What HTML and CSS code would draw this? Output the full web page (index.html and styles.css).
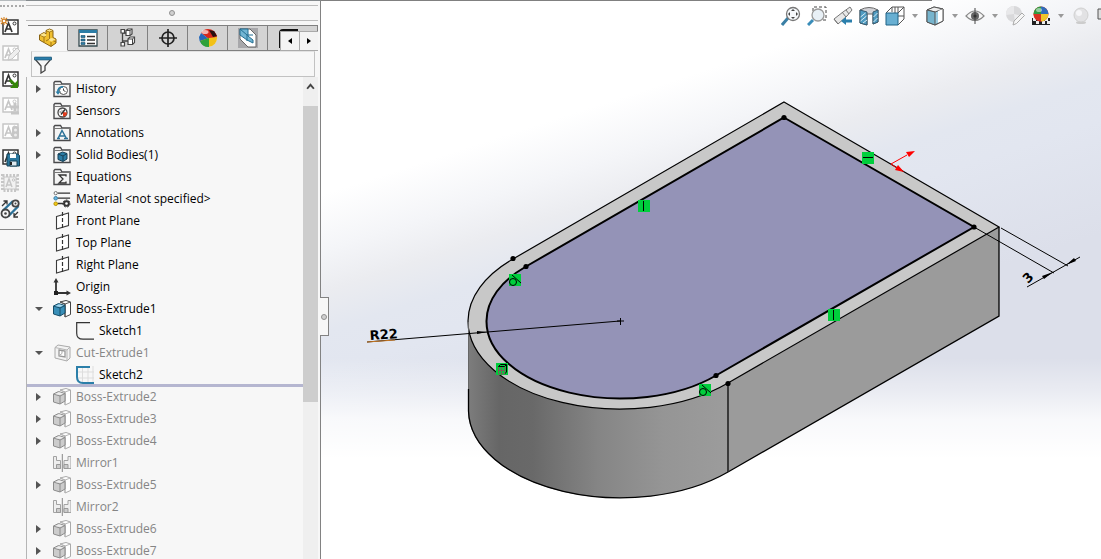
FILE: index.html
```
<!DOCTYPE html>
<html lang="en">
<head>
<meta charset="utf-8">
<title>Part design</title>
<link rel="stylesheet" href="styles.css">
</head>
<body>
<svg class="defs" aria-hidden="true">
  <defs>
    <linearGradient id="ball" x1="0" y1="0" x2="1" y2="1"><stop offset="0" stop-color="#fff"/><stop offset="1" stop-color="#b8b8ba"/></linearGradient>
    <symbol id="folder" viewBox="0 0 18 18"><path d="M1 16.5V2.5l1-1h5.5l1.500 2.500h8v12.500z" fill="#f4f4f4" stroke="#4a4a4c" stroke-width="1.400"/><path d="M1 4.500h16" stroke="#777" stroke-width="1"/></symbol>
    <symbol id="history" viewBox="0 0 18 18"><use href="#folder"/><circle cx="10.500" cy="10.500" r="4" fill="#fff" stroke="#555"/><path d="M10.500 8.500v2l2 1" fill="none" stroke="#444"/><path d="M5 13c-1-4 2-6.500 5-6" fill="none" stroke="#2a7da5" stroke-width="1.800"/><path d="M2.500 11.500h5L5 14.800z" fill="#2a7da5"/></symbol>
    <symbol id="sensors" viewBox="0 0 18 18"><use href="#folder"/><circle cx="9.500" cy="10.500" r="4.500" fill="#fff" stroke="#444" stroke-width="1.300"/><path d="M10 10l4 .5a4 4 0 0 1-4 4z" fill="#e23c1c"/><path d="M8 12.500L12 7.500" stroke="#333" stroke-width="1.500"/><path d="M6.500 10h2M8 7.500l1 1" stroke="#555"/></symbol>
    <symbol id="annotations" viewBox="0 0 18 18"><use href="#folder"/><path d="M5 14.500L9 6.500l4.500 8M6.500 12h5.500M4 14.500h3M11 14.500h4" fill="none" stroke="#2b7197" stroke-width="1.500"/></symbol>
    <symbol id="bodies" viewBox="0 0 18 18"><use href="#folder"/><path d="M5 8l4.500-2 4.500 1.500v5.500l-4 2.500-5-2z" fill="#2b7da6" stroke="#173f55"/><path d="M5 8l5 2 4-2.500M10 10v5" fill="none" stroke="#173f55"/></symbol>
    <symbol id="equations" viewBox="0 0 18 18"><use href="#folder"/><path d="M13 8.500V7H6l4 4-4 4h7v-1.500" fill="none" stroke="#333" stroke-width="1.300"/></symbol>
    <symbol id="material" viewBox="0 0 20 18"><path d="M5 2.500h14M5 8h14M5 14h7" stroke="#333" stroke-width="1.500"/><circle cx="3" cy="2.500" r="1.800" fill="#fff" stroke="#666"/><circle cx="3" cy="8.200" r="2" fill="#66b6e4" stroke="#38789c"/><circle cx="3" cy="14.300" r="2" fill="#f4c915" stroke="#ae8b00"/><circle cx="15" cy="14" r="2.600" fill="#fff" stroke="#333" stroke-width="2.200"/><circle cx="15" cy="14" r="4" fill="none" stroke="#333" stroke-dasharray="2 1.500"/></symbol>
    <symbol id="plane" viewBox="0 0 18 18"><path d="M3.500 4.500L15.500 1v12.500l-12 3.500z" fill="#fff" stroke="#3c3c3c" stroke-width="1.100"/><path d="M9.500 0v18" stroke="#333" stroke-width="1.200" stroke-dasharray="4 2"/></symbol>
    <symbol id="origin" viewBox="0 0 18 18"><path d="M3 2v13h12" fill="none" stroke="#333" stroke-width="1.800"/><path d="M3 0l2.500 4.500h-5zM18 15l-4.500-2.500v5z" fill="#333"/><path d="M1 13h4v4H1z" fill="#222"/></symbol>
    <symbol id="boss" viewBox="0 0 18 18"><path d="M7 2l6-1.500 4.500 1.500v12.500L12 17V4z" fill="#fff" stroke="#444"/><path d="M7 2l5 2 5.500-2M12 4v13" fill="none" stroke="#555"/><path d="M.5 6l5-2.500L12 5.500v7.500l-5 3-6.500-2z" fill="#398fb8" stroke="#184e69"/><path d="M.5 6l6.500 2 5-2.500M7 8v8" fill="none" stroke="#184e69"/><path d="M2 6l4-1.700 4.500 1.300L7 7z" fill="#a7d8ef"/></symbol>
    <symbol id="boss-off" viewBox="0 0 18 18"><path d="M7 2l6-1.500 4.500 1.500v12.500L12 17V4z" fill="#fff" stroke="#aaa"/><path d="M7 2l5 2 5.500-2M12 4v13" fill="none" stroke="#b5b5b5"/><path d="M.5 6l5-2.500L12 5.500v7.500l-5 3-6.500-2z" fill="#ccc" stroke="#8c8c8c"/><path d="M.5 6l6.500 2 5-2.500M7 8v8" fill="none" stroke="#8c8c8c"/><path d="M2 6l4-1.700 4.500 1.300L7 7z" fill="#eee"/></symbol>
    <symbol id="cut" viewBox="0 0 18 18"><path d="M2 3.500L5 1l12 2v11l-3 3-12-3z" fill="#f3f3f3" stroke="#aaa"/><path d="M2 3.500L14 6v11M14 6l3-3" fill="none" stroke="#b5b5b5"/><path d="M6 6l6 1v6l-6-1z" fill="#fff" stroke="#999" stroke-width="1.300"/><path d="M7 11l2-1.500V7" fill="none" stroke="#aaa"/></symbol>
    <symbol id="sketch" viewBox="0 0 18 18"><path d="M14 .7H.7v10.500q0 6 6.300 6h11" fill="none" stroke="#333" stroke-width="1.200"/></symbol>
    <symbol id="sketch-on" viewBox="0 0 18 18"><path d="M6.500 0v18M12 0v18M17 0v18M0 6h18M0 12h18" stroke="#ddd"/><path d="M14 1H1v10q0 6 6 6h11" fill="none" stroke="#2b7fa9" stroke-width="2"/></symbol>
    <symbol id="mirror" viewBox="0 0 18 18"><path d="M.5 2.500h3v4h4v8h-7zM18 2.500h-3v4h-4v8h7z" fill="#eee" stroke="#a3a3a3"/><path d="M3.500 10.500h4v4h-4zM11 10.500h4v4h-4z" fill="#ccc" stroke="#999"/><path d="M9.300 0v18" stroke="#888"/></symbol>
    <symbol id="a-box" viewBox="0 0 20 20"><path d="M3 3h15v14H3z" fill="#fff" stroke="currentColor" stroke-width="1.500"/><path d="M5 15L8.500 6 12 15M6.500 12h4" fill="none" stroke="currentColor" stroke-width="1.700"/><circle cx="14.500" cy="6.500" r="1.500" fill="none" stroke="currentColor"/></symbol>
    <symbol id="tri" viewBox="0 0 6 4"><path d="M0 0h6L3 4z" fill="#999"/></symbol>
  </defs>
</svg>
<div class="app">
  <nav class="rail" aria-label="Annotation tools">
    <div class="grip"></div>
    <button aria-label="New annotation"><svg viewBox="0 0 20 20"><use href="#a-box"/><path d="M4 0v8M0 4h8M1 1l6 6M7 1L1 7" stroke="#d8821f" stroke-width="1.100"/><circle cx="4" cy="4" r="1.200" fill="#fff"/></svg></button>
    <button aria-label="Edit annotation" class="off" disabled><svg viewBox="0 0 20 20"><use href="#a-box"/><path d="M8 17l1-4 8-8 3 3-8 8z" fill="#eee" stroke="currentColor"/></svg></button>
    <button aria-label="Insert annotation"><svg viewBox="0 0 20 20"><use href="#a-box"/><path d="M11 10l4 4 3-3v8h-8l3-3-4-4z" fill="#36860a"/></svg></button>
    <button aria-label="Add annotation" class="off" disabled><svg viewBox="0 0 20 20"><use href="#a-box"/><path d="M15 8v8M11 12h8M11 18h8" stroke="currentColor" stroke-width="3"/></svg></button>
    <button aria-label="Lock annotation" class="off" disabled><svg viewBox="0 0 20 20"><use href="#a-box"/><rect x="12" y="5" width="7" height="13" rx="3" fill="currentColor"/><circle cx="15.500" cy="9" r="1.500" fill="#eee"/><circle cx="15.500" cy="14" r="1.500" fill="#eee"/></svg></button>
    <button aria-label="Save annotation"><svg viewBox="0 0 20 20"><use href="#a-box"/><path d="M7 7h11l1.500 1.500V19H7z" fill="#2b779d" stroke="#174257"/><path d="M10 7h6v4h-6z" fill="#fff"/><path d="M10 14h7v5h-7z" fill="#dfeaf0" stroke="#174257"/><path d="M11 15v3" stroke="#222" stroke-width="2"/></svg></button>
    <button aria-label="Explode block" class="off" disabled><svg viewBox="0 0 20 20"><path d="M2.500 2.500h15v15h-15z" fill="none" stroke="currentColor" stroke-width="3" stroke-dasharray="2 1.500"/><path d="M4 4h12v12H4z" fill="#f2f2f2" stroke="currentColor"/><path d="M6 14L9 6l3 8M7 12h4" fill="none" stroke="currentColor" stroke-width="1.500"/><circle cx="13.500" cy="7" r="1.200" fill="none" stroke="currentColor"/></svg></button>
    <button aria-label="Belt and chain"><svg viewBox="0 0 20 20"><path d="M2.500 12L13 2M8 17.500L18.500 7" stroke="#2b7299" stroke-width="2.400"/><circle cx="5.500" cy="14.500" r="4" fill="#f7f7f7" stroke="#444" stroke-width="1.800"/><circle cx="5.500" cy="14.500" r="1.300" fill="#444"/><circle cx="15.500" cy="4.500" r="3.200" fill="#f7f7f7" stroke="#444" stroke-width="1.800"/><circle cx="15.500" cy="4.500" r="1" fill="#444"/><path d="M2 7l5-5M3.500 2H7v3.500M18 13l-4 4M14 14v4h4" fill="none" stroke="#333" stroke-width="1.300"/></svg></button>
    <div class="rail-end"></div>
  </nav>
  <aside class="panel">
    <div class="strip"></div>
    <div class="handle"><i class="knob"></i></div>
    <div class="tabs" role="tablist">
      <button role="tab" class="tab active" aria-selected="true" aria-label="Feature tree"><svg viewBox="0 0 20 20"><path d="M1.500 7L6 4.500 8 6V2.500L11.500 1l3.500 1.500v7l3 1.500v4l-5 3.500L1.500 12z" fill="#f0bf2e" stroke="#8a6310"/><path d="M8 2.500L11.500 4 15 2.500M11.500 4v7l6.500 3M11.500 11L8 13M1.500 7L6 9l2-1M6 9v5M13 14v4" fill="none" stroke="#8a6310" stroke-width=".8"/><path d="M2 7l4-2 2 1.500V8L6 8.500zM8.500 2.400l3-1 3 1-3 1.200zM12 10.500l2-.5 3.500 1.500-4 2-3-1.500z" fill="#fbe58e"/></svg></button>
      <button role="tab" class="tab" aria-label="Properties"><svg viewBox="0 0 20 20"><path d="M1 2h18v16H1z" fill="#fff" stroke="#34494f" stroke-width="1.300"/><path d="M1 2h18v3H1z" fill="#2c7da6"/><path d="M3 7.500h4v2H3zM3 11h4v2H3zM3 14.500h4v2H3z" fill="#2c7da6" stroke="#174c66" stroke-width=".6"/><path d="M9 8.500h8M9 12h8M9 15.500h8" stroke="#333" stroke-width="1.500"/></svg></button>
      <button role="tab" class="tab" aria-label="Configurations"><svg viewBox="0 0 20 20"><path d="M4.500 2v16M4.500 5h5M4.500 13h6" fill="none" stroke="#444" stroke-width="1.300"/><path d="M3 1.500h3.500V5H3zM3 14.500h3.500V18H3zM8 2.500L10 1h4v5l-2 1.500H8zM10 11l2-2h4.500v5.500l-2 2H10z" fill="#fff" stroke="#444" stroke-width="1.200"/><path d="M8 2.500h4v5M12 2.500L14 1M10 11h4.500v5.500M14.500 11l2-2" fill="none" stroke="#444"/></svg></button>
      <button role="tab" class="tab" aria-label="Dimensions"><svg viewBox="0 0 20 20"><circle cx="10" cy="10" r="6" fill="none" stroke="#222" stroke-width="1.700"/><path d="M10 1v18M1 10h18" stroke="#222" stroke-width="1.700"/></svg></button>
      <button role="tab" class="tab" aria-label="Display"><svg viewBox="0 0 20 20"><circle cx="10" cy="10" r="9" fill="#eee"/><path d="M10 1a9 9 0 0 1 9 8l-7 3-9-7A9 9 0 0 1 10 1z" fill="#d7281b"/><path d="M1 9l2-4 8 6-1 7.500A9 9 0 0 1 1 9z" fill="#2466b8"/><path d="M2 13l9-3 8-1a9 9 0 0 1-9 10z" fill="#f2c117"/><path d="M2 13l9-3v9a9 9 0 0 1-9-6z" fill="#2fa138"/><path d="M11 2l5 1 3 5-4 1z" fill="#271010"/><ellipse cx="7" cy="4" rx="3.500" ry="2" fill="#fff" opacity=".65"/></svg></button>
      <button role="tab" class="tab" aria-label="Section"><svg viewBox="0 0 20 20"><path d="M0 0h20v20H0z" fill="#a8a8ab"/><path d="M2 1h10l6 6v12h-8L2 11z" fill="#fff" stroke="#666"/><path d="M2 1h8v7l5 4v3L9 12 2 7z" fill="#72b5d3" stroke="#236f92"/><path d="M2 1l7 6h6M9 7v6" fill="none" stroke="#236f92"/></svg></button>
      <button role="tab" class="tab last" aria-label="More tools"><svg viewBox="0 0 20 20"><path d="M2 20V5q0-3 3-3h15" fill="none" stroke="#111" stroke-width="2"/></svg></button>
      <div class="spin"><button aria-label="Previous tabs"><svg viewBox="0 0 6 6"><path d="M5 0v6L1 3z"/></svg></button><button aria-label="Next tabs"><svg viewBox="0 0 6 6"><path d="M1 0v6l4-3z"/></svg></button></div>
    </div>
    <div class="filter">
      <label for="filter" aria-label="Filter tree"><svg viewBox="0 0 18 18"><path d="M1 3l6 7v7l4-2.500V10l6-7z" fill="#f7f7f7" stroke="#444" stroke-width="1.300"/><path d="M.5 1h17v3H.5z" fill="#2a7daa" stroke="#1b526f" stroke-width=".6"/></svg></label>
      <input id="filter" type="text">
    </div>
    <div class="tree-wrap">
      <ul class="tree">
        <li><button class="tw" aria-label="Expand"></button><svg><use href="#history"/></svg><span>History</span></li>
        <li><i class="tw-gap"></i><svg><use href="#sensors"/></svg><span>Sensors</span></li>
        <li><button class="tw" aria-label="Expand"></button><svg><use href="#annotations"/></svg><span>Annotations</span></li>
        <li><button class="tw" aria-label="Expand"></button><svg><use href="#bodies"/></svg><span>Solid Bodies(1)</span></li>
        <li><i class="tw-gap"></i><svg><use href="#equations"/></svg><span>Equations</span></li>
        <li><i class="tw-gap"></i><svg><use href="#material"/></svg><span>Material &lt;not specified&gt;</span></li>
        <li><i class="tw-gap"></i><svg><use href="#plane"/></svg><span>Front Plane</span></li>
        <li><i class="tw-gap"></i><svg><use href="#plane"/></svg><span>Top Plane</span></li>
        <li><i class="tw-gap"></i><svg><use href="#plane"/></svg><span>Right Plane</span></li>
        <li><i class="tw-gap"></i><svg><use href="#origin"/></svg><span>Origin</span></li>
        <li><button class="tw open" aria-label="Collapse"></button><svg><use href="#boss"/></svg><span>Boss-Extrude1</span></li>
        <li class="child"><i class="tw-gap"></i><svg><use href="#sketch"/></svg><span>Sketch1</span></li>
        <li class="dim"><button class="tw open" aria-label="Collapse"></button><svg><use href="#cut"/></svg><span>Cut-Extrude1</span></li>
        <li class="child"><i class="tw-gap"></i><svg><use href="#sketch-on"/></svg><span>Sketch2</span></li>
        <li class="rollback" role="separator"></li>
        <li class="dim"><button class="tw" aria-label="Expand"></button><svg><use href="#boss-off"/></svg><span>Boss-Extrude2</span></li>
        <li class="dim"><button class="tw" aria-label="Expand"></button><svg><use href="#boss-off"/></svg><span>Boss-Extrude3</span></li>
        <li class="dim"><button class="tw" aria-label="Expand"></button><svg><use href="#boss-off"/></svg><span>Boss-Extrude4</span></li>
        <li class="dim"><i class="tw-gap"></i><svg><use href="#mirror"/></svg><span>Mirror1</span></li>
        <li class="dim"><button class="tw" aria-label="Expand"></button><svg><use href="#boss-off"/></svg><span>Boss-Extrude5</span></li>
        <li class="dim"><i class="tw-gap"></i><svg><use href="#mirror"/></svg><span>Mirror2</span></li>
        <li class="dim"><button class="tw" aria-label="Expand"></button><svg><use href="#boss-off"/></svg><span>Boss-Extrude6</span></li>
        <li class="dim"><button class="tw" aria-label="Expand"></button><svg><use href="#boss-off"/></svg><span>Boss-Extrude7</span></li>
      </ul>
      <div class="scroll">
        <button aria-label="Scroll up"><svg viewBox="0 0 8 6"><path d="M1 5l3-3.500L7 5" fill="none" stroke="#444" stroke-width="1.700"/></svg></button>
        <div class="thumb"></div>
      </div>
    </div>
    <button class="splitter" aria-label="Collapse panel"><i class="knob"></i></button>
  </aside>
  <main class="view">
    <svg class="model" viewBox="321 0 780 559" preserveAspectRatio="xMinYMin meet" role="img" aria-label="Part model">
      <defs>
        <linearGradient id="cyl" gradientUnits="userSpaceOnUse" x1="468" y1="0" x2="728" y2="0"><stop offset="0" stop-color="#7d7d7d"/><stop offset=".12" stop-color="#666"/><stop offset=".25" stop-color="#696969"/><stop offset=".5" stop-color="#858585"/><stop offset=".75" stop-color="#959595"/><stop offset="1" stop-color="#9c9c9c"/></linearGradient>
        <g id="tangent"><path d="M0 0h12v12H0z" fill="#00ce3c"/><circle cx="4" cy="8" r="3.500" fill="none" stroke="#000"/><path d="M3 1l9 8" stroke="#000"/></g>
        <g id="vertical"><path d="M0 0h12v12H0z" fill="#00ce3c"/><path d="M5.500 1v10" stroke="#000"/></g>
      </defs>
      <path d="M468 321v90A152 88 0 0 0 728 472V383z" fill="url(#cyl)"/>
      <path d="M728 383v89l271-156v-89z" fill="#9b9b9b"/>
      <path d="M784 102L999 227 728 383A152 88 0 0 1 468 321A152 88 0 0 1 513 259z" fill="#c8c8c8" stroke="#000" stroke-width="1.200"/>
      <path d="M784 117.500L974 227 716 375.500A134 77 0 0 1 486.500 321A134 77 0 0 1 526 266.500z" fill="#9493b7" stroke="#000" stroke-width="2"/>
      <path d="M468.500 389v22A152 88 0 0 0 728 472L999 316V227" fill="none" stroke="#000" stroke-width="1.300"/>
      <path d="M468.500 322v67" stroke="#666"/>
      <path d="M728 383v89" stroke="#222" stroke-width="1.600"/>
      <g stroke="#000" fill="none"><path d="M367 342L620 321M617 321h7M620.500 318v7M974 227l80 46M1001 228l67 38M1027 287l53-30"/></g>
      <path d="M487 332l-10-1 0 3zM1053 272l-11 4 2 3zM1066 265l10-4-2-3z"/>
      <g><circle cx="784" cy="117.500" r="2.600"/><circle cx="974" cy="227" r="2.600"/><circle cx="716" cy="375.500" r="2.600"/><circle cx="526" cy="266.500" r="2.600"/><circle cx="513" cy="258.500" r="2.600"/><circle cx="728" cy="383.500" r="2.600"/></g>
      <use href="#vertical" x="638" y="200"/><use href="#vertical" x="828" y="309"/>
      <use href="#tangent" x="509" y="274"/><use href="#tangent" x="699" y="384"/>
      <path d="M862 152h12v12h-12z" fill="#00ce3c"/><path d="M863 157.500h10" stroke="#000"/>
      <path d="M496 363h12v12h-12z" fill="#00ce3c"/><path d="M498.500 366.500l2-2h6l-2 2zM506.500 365v7l-2 2" fill="none" stroke="#000"/><path d="M498.500 367v7h6v-7M501.500 367v7M498 370.500h7" fill="none" stroke="#7a5a5a"/>
      <g stroke="#f00" fill="#f00"><path d="M891 164l16-9M891 164l6 4"/><path d="M915 151l-9 1 3 5zM904 172l-9-2 3-5z" stroke="none"/></g>
      <path d="M367 342l28-2" stroke="#c77722"/>
      <text class="dim-text" transform="translate(370 340) rotate(-4)">R22</text>
      <text class="dim-text" transform="translate(1028 284) rotate(-45)">3</text>
    </svg>
    <div class="top-edge"></div>
    <div class="hud" role="toolbar" aria-label="View tools">
      <button aria-label="Zoom to fit"><svg viewBox="0 0 20 20"><path d="M1 19l6-7" stroke="#3a7fa5" stroke-width="3"/><circle cx="12" cy="8" r="6.500" fill="#f5f8fb" stroke="#777" stroke-width="1.300"/><path d="M12 3l2 2h-4zM12 13l2-2h-4zM7 8l2-2v4zM17 8l-2-2v4z" fill="#444"/></svg></button>
      <button aria-label="Zoom to area"><svg viewBox="0 0 20 20"><path d="M6 5V1h13v13h-4" fill="none" stroke="#444" stroke-dasharray="3 2"/><path d="M1 19l5-5" stroke="#3a8db9" stroke-width="3"/><circle cx="11" cy="9" r="6" fill="#e8f0f6" stroke="#999" stroke-width="1.300"/></svg></button>
      <button aria-label="Previous view"><svg viewBox="0 0 20 20"><path d="M1 13l9-7 7-5 2 3-5 6-9 8z" fill="#e8e8e8" stroke="#777"/><path d="M1 13l4 5M9 6l4 5M13 4l3 4" stroke="#777"/><path d="M8 15l5-4v2.500h6v3h-6V19z" fill="#2b7fac"/></svg></button>
      <button aria-label="Section view"><svg viewBox="0 0 20 20"><path d="M1 4q9-5 18 0v12l-5 2V8H8v11l-7-2z" fill="#d2d2d6" stroke="#666"/><path d="M1 4l7 2v13l-7-2zM19 4l-5 2v12l5-2z" fill="#4f9cc2" stroke="#365b70"/><path d="M1.500 11l5-4M1.500 15l6-5M4 17l4-3M14.500 11l4-4M14.500 16l4-4" stroke="#d8ecf5"/></svg></button>
      <button aria-label="View orientation"><svg viewBox="0 0 20 20"><path d="M1 7l6-6h12v12l-6 6M7 1v5M19 1l-6 6M10 1v12M7 10h12M13 1v6" fill="none" stroke="#555"/><path d="M1 7h12v12H1z" fill="#68afd2" stroke="#1e6286"/></svg></button>
      <button class="drop" aria-label="Orientation menu"><svg><use href="#tri"/></svg></button>
      <button aria-label="Display style"><svg viewBox="0 0 20 20"><path d="M2 4l7-3 9 2v12l-8 4-8-3z" fill="#9dcfe5" stroke="#555"/><path d="M2 4l8 2 8-3-9-2z" fill="#eee" stroke="#555"/><path d="M2 4l8 2v13l-8-3z" fill="#76b4cd" stroke="#555"/><path d="M13 5v12l5-2V3z" fill="#fff"/><path d="M18 3v12l-8 4" fill="none" stroke="#555"/></svg></button>
      <button class="drop" aria-label="Display menu"><svg><use href="#tri"/></svg></button>
      <button aria-label="Hide items"><svg viewBox="0 0 20 20"><path d="M1 10q9-10 18 0-9 9-18 0z" fill="#f5f5f5" stroke="#888" stroke-width="1.200"/><circle cx="10" cy="10" r="4" fill="#666"/><circle cx="10" cy="10" r="1.500" fill="#222"/><path d="M10 2v16" stroke="#444"/></svg></button>
      <button class="drop" aria-label="Visibility menu"><svg><use href="#tri"/></svg></button>
      <button aria-label="Edit appearance" disabled><svg viewBox="0 0 20 20"><circle cx="9" cy="8" r="8" fill="#d9d9db"/><path d="M9 8V0a8 8 0 0 0-8 9z" fill="#e8e8ea"/><path d="M9 8l8 2a8 8 0 0 1-7 6z" fill="#ececee"/><path d="M8 19l1-4 8-8 2.500 2.500-8 8z" fill="#f6f6f6" stroke="#aaa"/></svg></button>
      <button aria-label="Apply scene"><svg viewBox="0 0 20 20"><path d="M1 12h18v7H1z" fill="#222"/><path d="M2 12h3v3H2zM5 15h3v3H5zM8 12h3v3H8zM11 15h3v3h-3zM14 12h3v3h-3zM16 15h3v3h-3z" fill="#eee"/><circle cx="10" cy="8" r="7.500" fill="#d83222"/><path d="M10 8V.5a7.500 7.500 0 0 0-7.500 7.500z" fill="#2f9b43"/><path d="M10 8H2.500a7.500 7.500 0 0 0 7.500 7.500z" fill="#d83222"/><path d="M10 8h7.500a7.500 7.500 0 0 1-7.500 7.500z" fill="#efc529"/><path d="M10 8h7.500A7.500 7.500 0 0 0 10 .5z" fill="#306cba"/><ellipse cx="8" cy="4" rx="3" ry="2" fill="#fff" opacity=".5"/></svg></button>
      <button class="drop" aria-label="Scene menu"><svg><use href="#tri"/></svg></button>
      <button aria-label="View settings" disabled><svg viewBox="0 0 20 20"><ellipse cx="10" cy="16.500" rx="5" ry="1.500" fill="#ccc"/><circle cx="10" cy="9" r="7" fill="#e2e2e4" stroke="#d0d0d0"/><circle cx="8" cy="7" r="3" fill="#f6f6f8"/></svg></button>
      <button aria-label="Screen options"><svg viewBox="0 0 20 20"><path d="M1 3h18v10H1z" fill="#ddd" stroke="#555"/></svg></button>
    </div>
  </main>
</div>
</body>
</html>
```

FILE: styles.css
```
* { box-sizing: border-box; }
body { margin: 0; background: #f7f7f7; color: #000; font: 12px/22px "Open Sans", "Noto Sans", sans-serif; }
button { margin: 0; padding: 0; border: 0; background: none; color: inherit; font: inherit; display: flex; align-items: center; justify-content: center; }
svg { display: block; flex: none; }
.defs { position: absolute; width: 0; height: 0; }
.app { display: flex; height: 100vh; overflow: hidden; }

.rail { flex: none; width: 26px; padding-right: 5px; color: #333; border-top: 1px solid #b5babd; }
.grip { width: 24px; height: 4px; margin: 2px 0 7px; border-bottom: 2px dotted #aaa; }
.rail button { width: 20px; height: 26px; }
.rail button svg { width: 20px; height: 20px; }
.rail .off { color: #c6c6c6; }
.rail-end { width: 24px; height: 1px; margin-top: 7px; background: #888; }

.panel { position: relative; flex: none; width: 295px; display: flex; flex-direction: column; padding-right: 2px; border-top: 1px solid #858a8d; border-right: 1px solid #828282; }
.strip { height: 5px; border-bottom: 1px solid #bcbcbc; }
.handle { display: flex; height: 15px; align-items: center; justify-content: center; border-bottom: 1px solid #bcbcbc; }
.knob { width: 6px; height: 6px; border: 1px solid #909090; border-radius: 50%; background: #d0d0d0; }
.tabs { position: relative; display: flex; height: 26px; margin: 4px 0 0 2px; overflow: hidden; }
.tab { flex: none; width: 40px; background: #d3d3d3; border: solid #808080; border-width: 1px 1px 1px 0; }
.tab svg { width: 20px; height: 20px; }
.tab.active { background: #f7f7f7; border-bottom-color: #f7f7f7; }
.tab.last { width: 50px; justify-content: flex-start; padding-left: 10px; }
.spin { position: absolute; right: 0; bottom: 0; display: flex; padding: 1px 0 1px 1px; background: #aaa; gap: 1px; }
.spin button { width: 18px; height: 18px; background: #f4f4f4; }
.spin svg { width: 6px; height: 6px; }
.filter { display: flex; height: 26px; margin: 0 3px 0 5px; border: 1px solid #c2c2c2; border-top-color: #e2e2e2; }
.filter label { padding: 4px 2px; }
.filter svg { width: 18px; height: 18px; }
.filter input { flex: 1; min-width: 0; border: 0; outline: 0; background: none; font: inherit; }
.tree-wrap { flex: 1; min-height: 0; display: flex; border-left: 1px solid #b5b5b5; }
.tree { flex: 1; min-width: 0; margin: 0; padding: 1px 0 0; overflow: hidden; list-style: none; }
.tree li { display: flex; align-items: center; height: 22px; padding-left: 8px; white-space: nowrap; }
.tree svg { width: 18px; height: 18px; margin-right: 5px; }
.tw, .tw-gap { flex: none; width: 18px; height: 18px; justify-content: flex-start; }
.tw::before { content: ""; margin-left: 1px; border: solid transparent; border-width: 4px 0 4px 5px; border-left-color: #555; }
.tw.open::before { margin-left: 0; border-width: 4px 4px 0 4px; border-color: #555 transparent; }
.tree .child { padding-left: 31px; }
.tree .dim { color: #858585; }
.tree .rollback { height: 3px; margin: -2px 0 -1px; background: #b5b6d0; }
.scroll { flex: none; width: 15px; background: #efefef; }
.scroll button { width: 15px; height: 29px; padding-bottom: 10px; }
.scroll button svg { width: 9px; height: 7px; }
.thumb { height: 296px; background: #cdcdcd; }
.splitter { position: absolute; z-index: 2; right: -9px; top: 296px; width: 9px; height: 39px; border: 1px solid #828282; border-left: 0; background: #f7f7f7; }

.view { position: relative; flex: 1; min-width: 0; overflow: hidden;
  background: linear-gradient(180deg, rgba(255,255,255,0) 64%, rgba(255,255,255,.4) 70%, rgba(255,255,255,.8) 75%, #fff 82%), linear-gradient(162deg, #fff 0, #fff 24%, #f4f5f8 31%, #ebecf0 36%, #e3e7f0 41%, #e2e6f0 46%, #dcdfea 60%); }
.model { width: 100%; height: 100%; }
.dim-text { font: bold 13px "DejaVu Sans", sans-serif; }
.top-edge { position: absolute; left: 0; top: 0; width: 611px; height: 1px; background: #808080; }
.hud { position: absolute; top: 6px; left: 460px; right: 0; display: flex; gap: 6px; overflow: hidden; }
.hud button { flex: none; width: 20px; height: 20px; }
.hud button svg { width: 20px; height: 20px; }
.hud .drop { width: 8px; }
.hud .drop svg { width: 6px; height: 4px; }
```
